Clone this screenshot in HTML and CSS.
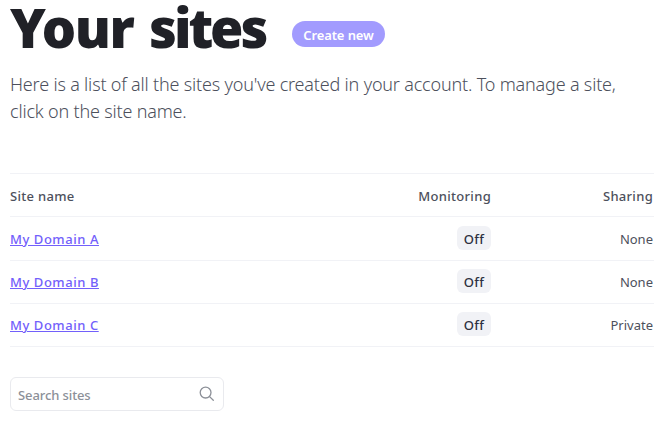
FILE: index.html
```
<!DOCTYPE html>
<html lang="en">
<head>
<meta charset="utf-8">
<title>Your sites</title>
<link rel="stylesheet" href="styles.css">
</head>
<body>
<main class="page">
  <header class="heading">
    <h1 class="title">Your <span class="title-tight">sites</span></h1>
    <a class="create">Create new</a>
  </header>
  <p class="intro">Here is a list of all the sites you've created in your account. To manage a site,<br>click on the site name.</p>
  <section class="table">
    <div class="row head"><span class="name">Site name</span><span class="monitoring">Monitoring</span><span class="sharing">Sharing</span></div>
    <div class="row tall"><span class="name"><a class="link">My Domain A</a></span><span class="monitoring"><span class="badge">Off</span></span><span class="sharing">None</span></div>
    <div class="row"><span class="name"><a class="link">My Domain B</a></span><span class="monitoring"><span class="badge">Off</span></span><span class="sharing">None</span></div>
    <div class="row"><span class="name"><a class="link">My Domain C</a></span><span class="monitoring"><span class="badge">Off</span></span><span class="sharing">Private</span></div>
  </section>
  <div class="search">
    <span class="placeholder">Search sites</span>
    <svg class="icon" width="16" height="16" viewBox="0 0 16 16" fill="none" stroke="currentColor" stroke-width="1.3" stroke-linecap="round"><circle cx="6.6" cy="6.6" r="5.4"/><path d="M10.6 10.6l3.7 3.7"/></svg>
  </div>
</main>
</body>
</html>
```
FILE: styles.css
```
* { box-sizing: border-box; }
body {
  margin: 0;
  background: #fff;
  color: #4d505c;
  font: 13px/20px "Noto Sans", "Open Sans", sans-serif;
}
.page { padding: 0 16px 0 10px; }
.heading { display: flex; height: 60px; }
.title {
  width: 282px;
  margin: 0;
  color: #202127;
  font-size: 54px;
  font-weight: 900;
  line-height: 55px;
  letter-spacing: -1.4px;
  word-spacing: 3px;
  white-space: nowrap;
}
.title-tight { letter-spacing: -3.1px; }
.create {
  width: 93px;
  height: 26px;
  margin-top: 21px;
  border-radius: 13px;
  background: #a29bfe;
  color: #fff;
  font-weight: 600;
  line-height: 28px;
  letter-spacing: -0.1px;
  text-align: center;
}
.intro {
  height: 113px;
  margin: 0;
  padding-top: 11px;
  font-size: 18px;
  font-weight: 350;
  line-height: 27px;
  letter-spacing: -0.185px;
  white-space: nowrap;
}
.table { border-top: 1px solid #f1f2f6; }
.row {
  display: grid;
  grid-template-columns: 1fr 160px 162px;
  align-items: center;
  height: 43px;
  padding-right: 1px;
  border-bottom: 1px solid #f1f2f6;
}
.tall { height: 44px; }
.head { font-weight: 500; letter-spacing: 0.3px; }
.head > span { padding-top: 2px; }
.monitoring, .sharing { text-align: right; }
.head .sharing { letter-spacing: 0.3px; }
.link {
  color: #7260fb;
  font-weight: 500;
  letter-spacing: 0.55px;
  text-decoration: underline;
  text-underline-offset: 1px;
}
.badge {
  display: inline-block;
  width: 34px;
  height: 24px;
  margin-bottom: 2px;
  border-radius: 6px;
  background: #f1f2f6;
  color: #2d3040;
  font-weight: 500;
  line-height: 26px;
  letter-spacing: 0.4px;
  text-align: center;
  vertical-align: middle;
}
.search {
  display: flex;
  align-items: center;
  justify-content: space-between;
  width: 214px;
  height: 34px;
  margin-top: 30px;
  padding: 0 8px 0 7px;
  border: 1px solid #e9eaee;
  border-radius: 6px;
  color: #8c9098;
  font-weight: 500;
  letter-spacing: -0.1px;
}
.placeholder { padding-top: 2px; }
```
